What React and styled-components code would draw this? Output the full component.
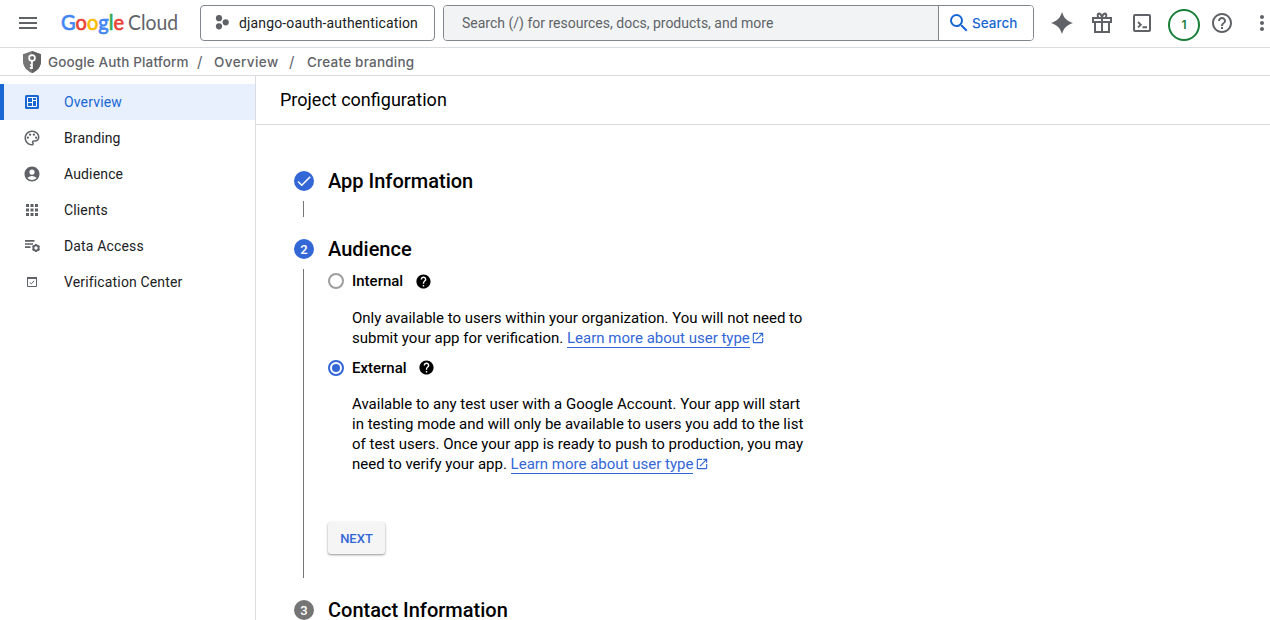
import React from "react";
import styled, { createGlobalStyle, css } from "styled-components";
import { MdMenu, MdSearch, MdHelpOutline, MdMoreVert, MdOutlinePalette, MdAccountCircle, MdApps, MdOpenInNew, MdHelp, MdCheck } from "react-icons/md";

const GlobalStyle = createGlobalStyle`
  * { box-sizing: border-box; }
  body { margin: 0; background: #fff; color: #000; font-family: Roboto, "Liberation Sans", sans-serif; overflow: hidden; }
  svg { display: block; flex: none; }
  button { font: inherit; cursor: pointer; }
`;

const Page = styled.div`
  height: 620px;
  display: flex;
  flex-direction: column;
  overflow: hidden;
`;

const TopBar = styled.header`
  height: 48px;
  flex: none;
  display: flex;
  align-items: center;
  padding: 0 0 2px 16px;
  border-bottom: 1px solid #dadce0;
  color: #5f6368;
  overflow: hidden;
`;

const IconButton = styled.button`
  width: ${(p) => p.$width || 40}px;
  height: 40px;
  flex: none;
  display: flex;
  align-items: center;
  justify-content: center;
  padding: 0;
  border: 0;
  background: none;
  color: #5f6368;
`;

const Logo = styled.svg`
  margin-left: 18px;
  font-family: Lato, "Liberation Sans", sans-serif;
`;

const ProjectPicker = styled.button`
  width: 235px;
  height: 36px;
  flex: none;
  margin-left: 20px;
  display: flex;
  align-items: center;
  gap: 9px;
  padding: 0 0 0 14px;
  background: #fff;
  border: 1px solid #80868b;
  border-radius: 4px;
  color: #202124;
  font-size: 14px;
  letter-spacing: 0.14px;
`;

const SearchBox = styled.div`
  width: 591px;
  height: 36px;
  flex: none;
  margin-left: 8px;
  display: flex;
  border: 1px solid #80868b;
  border-radius: 4px;
  overflow: hidden;
`;

const SearchField = styled.div`
  flex: 1;
  display: flex;
  align-items: center;
  padding-left: 18px;
  background: #f1f3f4;
  font-size: 14px;
  color: #5f6368;
`;

const SearchButton = styled.button`
  width: 95px;
  display: flex;
  align-items: center;
  gap: 1px;
  padding: 0 0 0 8px;
  border: 0;
  border-left: 1px solid #80868b;
  background: #fff;
  color: #1967d2;
  font: 500 13.5px Inter, "Liberation Sans", sans-serif;
`;

const Tools = styled.div`
  display: flex;
  align-items: center;
  margin-left: 8px;
`;

const NotificationCount = styled.span`
  width: 32px;
  height: 32px;
  flex: none;
  margin: 4px 2px 0 6px;
  display: flex;
  align-items: center;
  justify-content: center;
  border: 2px solid #188038;
  border-radius: 50%;
  color: #188038;
  font: 600 12px Inter, sans-serif;
`;

const Breadcrumbs = styled.nav`
  height: 28px;
  flex: none;
  display: flex;
  align-items: center;
  padding-left: 22px;
  border-bottom: 1px solid #dadce0;
  color: #5f6368;
  font: 500 13.5px Inter, "Liberation Sans", sans-serif;
  white-space: nowrap;
`;

const Crumb = styled.span`
  width: ${(p) => p.$width}px;
  margin-left: ${(p) => p.$left || 0}px;
  letter-spacing: ${(p) => p.$spacing || 0}px;
`;

const Slash = styled.span`
  width: ${(p) => p.$width}px;
  padding-left: ${(p) => p.$left}px;
  font-weight: 400;
  font-size: 15px;
`;

const Body = styled.div`
  flex: 1;
  display: flex;
  min-height: 0;
`;

const Sidebar = styled.aside`
  width: 256px;
  flex: none;
  padding-top: 8px;
  border-right: 1px solid #dadce0;
`;

const NavItem = styled.a`
  height: 36px;
  display: flex;
  align-items: center;
  padding-left: 19px;
  border-left: 4px solid transparent;
  font-size: 14px;
  letter-spacing: 0.15px;
  color: #202124;
  ${(p) => p.$active && css`
    background: #e8f0fe;
    border-color: #1967d2;
    color: #1967d2;
  `}
`;

const NavIcon = styled.span`
  width: 18px;
  margin-right: 23px;
  color: ${(p) => (p.$active ? "#1967d2" : "#5f6368")};
`;

const Main = styled.main`
  flex: 1;
  min-width: 0;
`;

const PageTitle = styled.h1`
  height: 49px;
  margin: 0;
  padding: 0 0 1px 24px;
  display: flex;
  align-items: center;
  border-bottom: 1px solid #dadce0;
  font-size: 18px;
  font-weight: 400;
`;

const Steps = styled.div`
  padding: 46px 0 0 38px;
`;

const StepHeader = styled.div`
  height: 20px;
  display: flex;
  align-items: center;
  gap: 14px;
`;

const StepBadge = styled.span`
  width: 20px;
  height: 20px;
  flex: none;
  display: flex;
  align-items: center;
  justify-content: center;
  border-radius: 50%;
  background: ${(p) => (p.$pending ? "#757575" : "#3367d6")};
  color: #fff;
  font-size: 13px;
  font-weight: 500;
`;

const StepTitle = styled.h2`
  margin: 0;
  font-size: 20px;
  line-height: 20px;
  font-weight: 500;
`;

const StepBody = styled.div`
  min-height: 16px;
  margin: 10px 0 22px 9px;
  padding: 0 0 ${(p) => (p.$filled ? 24 : 0)}px 24px;
  border-left: 1px solid #757575;
`;

const RadioRow = styled.label`
  height: 24px;
  display: flex;
  align-items: center;
  margin-top: ${(p) => p.$top || 0}px;
  font-size: 15px;
  font-weight: 500;
`;

const Radio = styled.span`
  width: 16px;
  height: 16px;
  margin-right: 8px;
  padding: 2px;
  border: 2px solid ${(p) => (p.$checked ? "#3367d6" : "#9e9e9e")};
  border-radius: 50%;
  background: ${(p) => (p.$checked ? "#3367d6" : "transparent")};
  background-clip: content-box;
`;

const RadioLabel = styled.span`
  margin-right: 11.4px;
`;

const HelpBadge = styled(MdHelp)`
  margin-bottom: ${(p) => p.$raise || 0}px;
`;

const Description = styled.p`
  margin: ${(p) => p.$top}px 0 0 24px;
  font-size: 15px;
  line-height: 20px;
  white-space: nowrap;
`;

const Link = styled.a`
  color: #3367d6;
  span { border-bottom: 1px solid #3367d6; }
  svg { display: inline-block; margin-left: 1.4px; vertical-align: -2px; }
`;

const NextButton = styled.button`
  width: 57px;
  height: 32px;
  margin-top: 48px;
  padding: 0;
  display: block;
  border: 0;
  border-radius: 3px;
  background: #f5f5f5;
  color: #3367d6;
  font-size: 13px;
  font-weight: 500;
  box-shadow: 0 1px 3px rgba(0, 0, 0, 0.2), 0 1px 2px rgba(0, 0, 0, 0.25);
`;

const ProjectIcon = () => (
  <svg width="15" height="16" viewBox="0 0 15 16" fill="#5f6368">
    <circle cx="4" cy="3.2" r="3.1" /><circle cx="10.7" cy="7.3" r="3.1" /><circle cx="4" cy="11.3" r="3.1" />
  </svg>
);

const SparkIcon = () => (
  <svg width="22" height="22" viewBox="0 0 22 22" fill="#5f6368">
    <path d="M11 0C12.8 6 16 9.200 22 11 16 12.800 12.800 16 11 22 9.200 16 6 12.800 0 11 6 9.200 9.200 6 11 0Z" />
  </svg>
);

const GiftIcon = () => (
  <svg width="20" height="22" viewBox="0 0 20 22" fill="none" stroke="#5f6368" strokeWidth="2">
    <path d="M1 6h18v4H1zM3 10v10h14V10M10 6v14M10 5C9 2 7.8 1.5 6.8 1.5S5.2 3.5 6.3 5.5M10 5c1-3 2.200-3.500 3.200-3.500s1.600 2 .5 4" />
  </svg>
);

const ShellIcon = () => (
  <svg width="18" height="18" viewBox="0 0 18 18" fill="none" stroke="#5f6368" strokeWidth="2">
    <rect x="1" y="1" width="16" height="16" rx="1" /><path d="M5 8l2.800 2.700L5 13.400M9.500 13.300h4.500" strokeWidth="1.900" />
  </svg>
);

const ShieldIcon = () => (
  <svg width="20" height="22" viewBox="0 0 20 22">
    <path d="M10 0l9 3.200v7c0 5.300-3.700 9.800-9 11.800-5.300-2-9-6.500-9-11.800v-7z" fill="#757575" />
    <path d="M10 0l9 3.200v7c0 5.300-3.700 9.800-9 11.800z" fill="#616161" />
    <circle cx="10" cy="7" r="2.900" fill="none" stroke="#fff" strokeWidth="1.700" />
    <path d="M10 9v9M10 16.800H7.800M10 14H8" stroke="#fff" strokeWidth="1.700" fill="none" />
  </svg>
);

const OverviewIcon = () => (
  <svg width="18" height="18" viewBox="0 0 18 18">
    <rect x="2" y="2" width="14" height="14" rx="1.500" fill="#1967d2" />
    <path d="M4.500 4.500h9v9h-9zM9.500 4.500v9M4.500 9.500h5M9.500 7.500h4" stroke="#fff" strokeWidth="1" fill="none" />
  </svg>
);

const DataAccessIcon = () => (
  <svg width="18" height="18" viewBox="0 0 18 18" fill="none" stroke="#5f6368">
    <path d="M2 3.900h9.500M2 7h8M2 10.100h5.500" strokeWidth="1.600" />
    <circle cx="13" cy="11" r="2.600" strokeWidth="1.900" />
    <path d="M13 7v1.500M13 13.500V15M9.500 9l1.300.700M15.200 12.300l1.300.700M9.500 13l1.300-.700M15.200 9.700l1.300-.700" strokeWidth="2" />
  </svg>
);

const VerificationIcon = () => (
  <svg width="18" height="18" viewBox="0 0 18 18" fill="none" stroke="#5f6368">
    <path d="M4.500 4.500h9v9h-9z" strokeWidth="1" /><path d="M4 5h10" strokeWidth="2" /><path d="M6.800 9.500l1.500 1.300 2.800-2.900" strokeWidth="1" />
  </svg>
);

const GoogleCloudLogo = () => (
  <Logo width="122" height="30" viewBox="0 0 122 30">
    <text x="3" y="22" fontSize="22" fontWeight="400" strokeWidth=".7" textLength="63" lengthAdjust="spacingAndGlyphs">
      <tspan fill="#4285f4" stroke="#4285f4">G</tspan><tspan fill="#ea4335" stroke="#ea4335">o</tspan><tspan fill="#fbbc04" stroke="#fbbc04">o</tspan><tspan fill="#4285f4" stroke="#4285f4">g</tspan><tspan fill="#34a853" stroke="#34a853">l</tspan><tspan fill="#ea4335" stroke="#ea4335">e</tspan>
    </text>
    <text x="70" y="22" fontSize="20.5" fill="#5f6368" textLength="50" lengthAdjust="spacingAndGlyphs">Cloud</text>
  </Logo>
);

const navItems = [
  { label: "Overview", icon: <OverviewIcon />, active: true },
  { label: "Branding", icon: <MdOutlinePalette size={18} /> },
  { label: "Audience", icon: <MdAccountCircle size={18} /> },
  { label: "Clients", icon: <MdApps size={18} /> },
  { label: "Data Access", icon: <DataAccessIcon /> },
  { label: "Verification Center", icon: <VerificationIcon /> },
];

const LearnMore = () => (
  <Link><span>Learn more about user type</span><MdOpenInNew size={14} /></Link>
);

export default function App() {
  return (
    <Page>
      <GlobalStyle />
      <TopBar>
        <IconButton $width={24}><MdMenu size={24} /></IconButton>
        <GoogleCloudLogo />
        <ProjectPicker><ProjectIcon />django-oauth-authentication</ProjectPicker>
        <SearchBox>
          <SearchField>Search (/) for resources, docs, products, and more</SearchField>
          <SearchButton><MdSearch size={24} />Search</SearchButton>
        </SearchBox>
        <Tools>
          <IconButton><SparkIcon /></IconButton>
          <IconButton><GiftIcon /></IconButton>
          <IconButton><ShellIcon /></IconButton>
          <NotificationCount>1</NotificationCount>
          <IconButton><MdHelpOutline size={24} /></IconButton>
          <IconButton><MdMoreVert size={24} /></IconButton>
        </Tools>
      </TopBar>
      <Breadcrumbs>
        <ShieldIcon />
        <Crumb $width={140} $left={6} $spacing={0.13}>Google Auth Platform</Crumb>
        <Slash $width={26} $left={9}>/</Slash>
        <Crumb $width={64} $spacing={0.4}>Overview</Crumb>
        <Slash $width={29} $left={11}>/</Slash>
        <Crumb $spacing={0.22}>Create branding</Crumb>
      </Breadcrumbs>
      <Body>
        <Sidebar>
          {navItems.map((n) => (
            <NavItem key={n.label} $active={n.active}>
              <NavIcon $active={n.active}>{n.icon}</NavIcon>
              {n.label}
            </NavItem>
          ))}
        </Sidebar>
        <Main>
          <PageTitle>Project configuration</PageTitle>
          <Steps>
            <StepHeader><StepBadge><MdCheck size={18} /></StepBadge><StepTitle>App Information</StepTitle></StepHeader>
            <StepBody />
            <StepHeader><StepBadge>2</StepBadge><StepTitle>Audience</StepTitle></StepHeader>
            <StepBody $filled>
              <RadioRow><Radio /><RadioLabel>Internal</RadioLabel><HelpBadge size={17} /></RadioRow>
              <Description $top={15}>
                Only available to users within your organization. You will not need to<br />
                submit your app for verification. <LearnMore />
              </Description>
              <RadioRow $top={8}><Radio $checked /><RadioLabel>External</RadioLabel><HelpBadge size={17} $raise={2} /></RadioRow>
              <Description $top={14}>
                Available to any test user with a Google Account. Your app will start<br />
                in testing mode and will only be available to users you add to the list<br />
                of test users. Once your app is ready to push to production, you may<br />
                need to verify your app. <LearnMore />
              </Description>
              <NextButton>NEXT</NextButton>
            </StepBody>
            <StepHeader><StepBadge $pending>3</StepBadge><StepTitle>Contact Information</StepTitle></StepHeader>
          </Steps>
        </Main>
      </Body>
    </Page>
  );
}
